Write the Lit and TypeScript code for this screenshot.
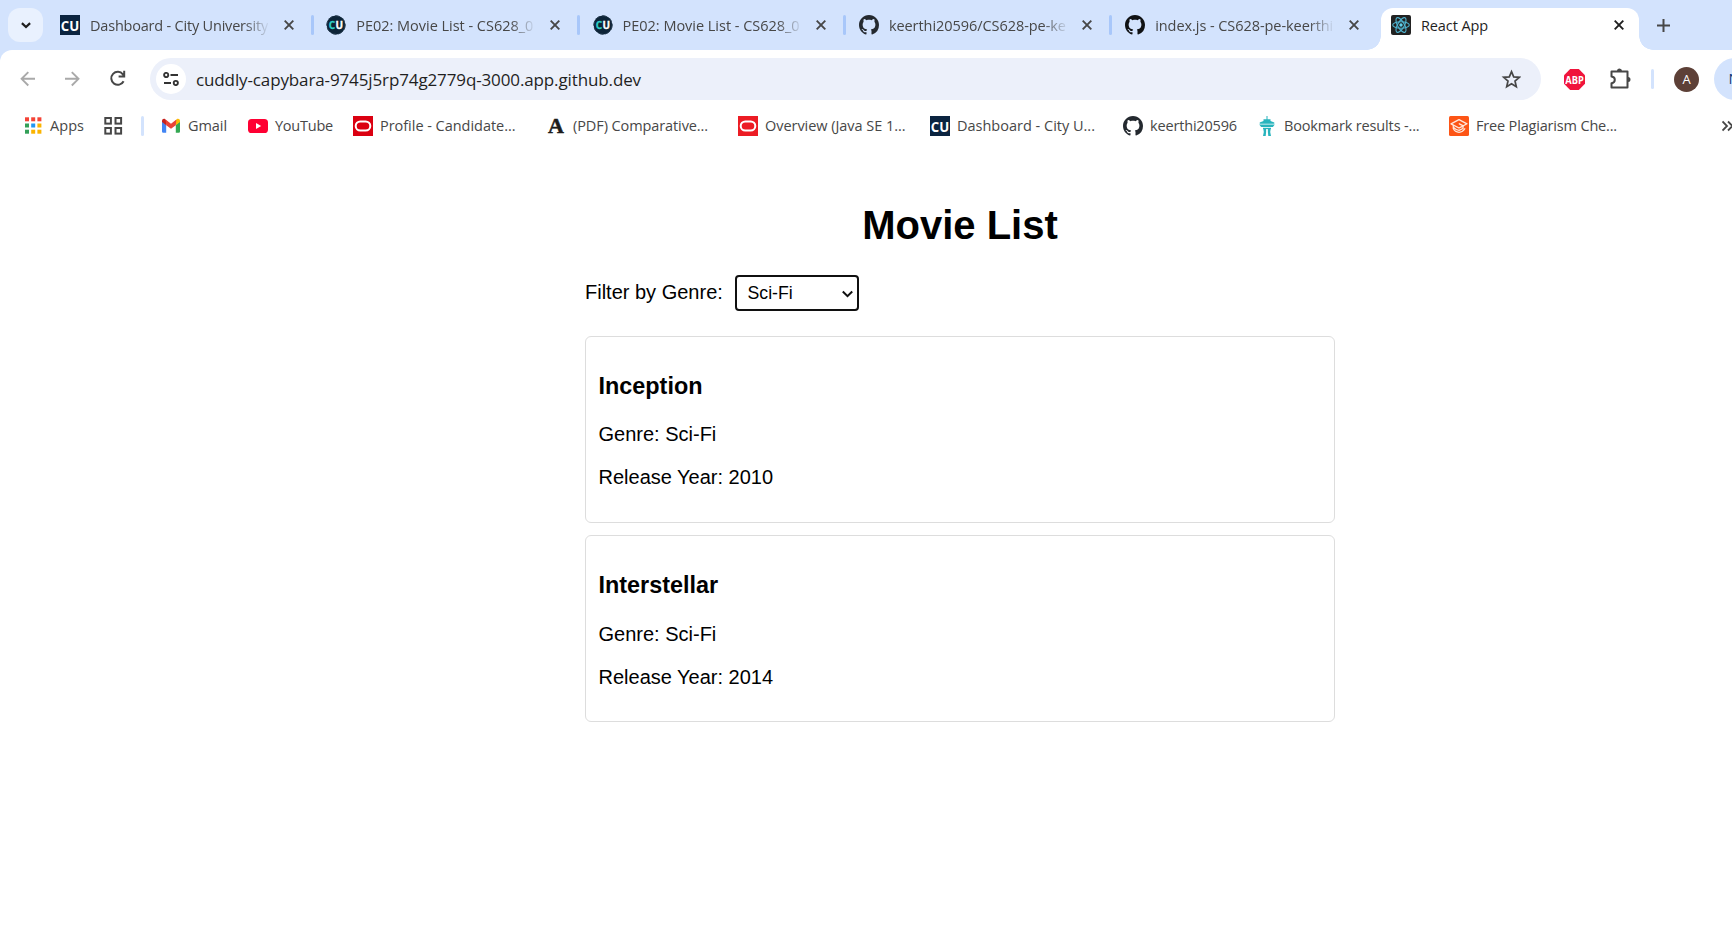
import { LitElement, html, svg, css, nothing } from "lit";
import { customElement, property } from "lit/decorators.js";

const github = (color: string) => html`<svg width="20" height="20" viewBox="0 0 16 16"><path fill=${color} d="M8 0C3.58 0 0 3.58 0 8c0 3.54 2.29 6.53 5.47 7.59.4.07.55-.17.55-.38 0-.19-.01-.82-.01-1.49-2.01.37-2.53-.49-2.69-.94-.09-.23-.48-.94-.82-1.13-.28-.15-.68-.52-.01-.53.63-.01 1.08.58 1.23.82.72 1.21 1.87.87 2.33.66.07-.52.28-.87.51-1.07-1.78-.2-3.64-.89-3.64-3.95 0-.87.31-1.59.82-2.15-.08-.2-.36-1.02.08-2.12 0 0 .67-.21 2.2.82.64-.18 1.32-.27 2-.27s1.36.09 2 .27c1.53-1.04 2.2-.82 2.2-.82.44 1.1.16 1.92.08 2.12.51.56.82 1.27.82 2.15 0 3.07-1.87 3.75-3.65 3.95.29.25.54.73.54 1.48 0 1.07-.01 1.93-.01 2.2 0 .21.15.46.55.38A8.01 8.01 0 0 0 16 8c0-4.42-3.58-8-8-8z"/></svg>`;

const cuSquare = html`<svg width="20" height="20" viewBox="0 0 20 20"><rect width="20" height="20" fill="#0b2440"/><text x="10" y="15.6" text-anchor="middle" font-family="Open Sans, sans-serif" font-weight="700" font-size="15" textLength="18.4" lengthAdjust="spacingAndGlyphs" fill="#fff">CU</text></svg>`;

const cuRound = html`<svg width="20" height="20" viewBox="0 0 20 20"><circle cx="10" cy="10" r="9.4" fill="#0d2438"/><circle cx="10" cy="10" r="9.2" fill="none" stroke="#2c4256" stroke-width="1" stroke-dasharray="5 2"/><text y="13.6" font-family="Open Sans, sans-serif" font-weight="700" font-size="10"><tspan x="2.8" fill="#2fd0c8" stroke="#2fd0c8" stroke-width=".3">C</tspan><tspan x="9.5" fill="#fff" stroke="#fff" stroke-width=".3">U</tspan></text></svg>`;

const oracle = (color: string) => html`<svg width="20" height="20" viewBox="0 0 20 20"><rect width="20" height="20" fill=${color}/><rect x="2.7" y="5.4" width="14.6" height="9.2" rx="4.6" fill="none" stroke="#fff" stroke-width="2"/></svg>`;

const react = html`<svg width="20" height="20" viewBox="0 0 20 20"><rect width="20" height="20" rx="2" fill="#222"/><g fill="none" stroke="#4fb4d0" stroke-width="1.1"><ellipse cx="10" cy="10" rx="8.3" ry="3.3"/><ellipse cx="10" cy="10" rx="8.3" ry="3.3" transform="rotate(60 10 10)"/><ellipse cx="10" cy="10" rx="8.3" ry="3.3" transform="rotate(120 10 10)"/></g><circle cx="10" cy="10" r="1.7" fill="#5fd0ec"/></svg>`;

const appsColors = ["#f44336", "#f44336", "#f44336", "#34a058", "#2196f3", "#fbb400", "#34a058", "#fbb400", "#fbb400"];
const appsGrid = html`<svg width="20" height="20" viewBox="0 0 20 20">${appsColors.map(
  (c, i) => svg`<rect x=${2 + (i % 3) * 6.2} y=${1.3 + Math.floor(i / 3) * 6.2} width="4" height="4" fill=${c}/>`
)}</svg>`;

const tiles = html`<svg width="20" height="20" viewBox="0 0 20 20" fill="none" stroke="#474747" stroke-width="2"><rect x="2.300" y="2" width="5.600" height="5.600"/><rect x="12.500" y="2" width="5.600" height="5.600"/><rect x="2.300" y="12" width="5.600" height="5.600"/><rect x="12.500" y="12" width="5.600" height="5.600"/></svg>`;

const gmail = html`<svg width="20" height="20" viewBox="0 0 20 20"><path fill="#4285f4" d="M1 5.5V15.6A1.2 1.2 0 0 0 2.2 16.8H5.2V8.6Z"/><path fill="#34a853" d="M14.8 8.6V16.8H17.8A1.2 1.2 0 0 0 19 15.6V5.5Z"/><path fill="#fbbc04" d="M14.8 4.6V9.2L19 6V4.8C19 3 17 2.200 15.700 3.300Z"/><path fill="#c5221f" d="M1 4.800V6L5.200 9.200V4.600L4.300 3.300C3 2.200 1 3 1 4.800Z"/><path fill="#ea4335" d="M4.600 3.600 10 7.800 15.400 3.600 14.800 9.200 10 12.800 5.200 9.200Z"/></svg>`;

const youtube = html`<svg width="20" height="20" viewBox="0 0 20 20"><rect y="3" width="20" height="14" rx="3.6" fill="#ff0033"/><path fill="#fff" d="M8 7v6l5.200-3z"/></svg>`;

const serifA = html`<svg width="20" height="20" viewBox="0 0 20 20"><text x="10" y="17.300" text-anchor="middle" font-family="Liberation Serif, serif" font-weight="700" font-size="22" fill="#1c1c1c" stroke="#1c1c1c" stroke-width=".5">A</text></svg>`;

const needle = html`<svg width="20" height="20" viewBox="0 0 20 20"><g fill="#28b4bd"><path d="M9.500 0h1v4h-1zM6.500 3.300h7v1.700l3.800 1.400v1.300H2.700V6.400L6.500 5z"/><path d="M2.200 8.500h15.600l-2 2.500H4.200z"/><path d="M6 11.800h8v1.300H6z"/><path d="M6.300 12.800h2.800v3.200l-.4 4H6l.8-4zM10.900 12.800h2.800l-.5 3.200.8 4h-2.700l-.4-4z"/></g></svg>`;

const cap = html`<svg width="20" height="20" viewBox="0 0 20 20"><rect width="20" height="20" rx="1.500" fill="#fd5516"/><g fill="none" stroke="#ffe9df" stroke-width="1.300" stroke-linejoin="round" stroke-linecap="round"><path d="M10.300 7.800 14.300 9.800 10 12 2 7.800 10 3.600 18 7.800 14.300 9.800"/><path d="M4.300 9.300V12.500Q6 16 10 16.300Q14 16 15.800 12.800M4.600 11.400Q7 14.200 10 14.300L14 12.500V10"/></g></svg>`;

const cross = (color: string) => html`<svg width="10" height="10" viewBox="0 0 10 10"><path d="M.7.7 9.300 9.300M9.300.7.7 9.300" stroke=${color} stroke-width="1.900"/></svg>`;

/** A single line of interface text, tracked so that it fills the given width. */
@customElement("fit-label")
class FitLabel extends LitElement {
  @property() text = "";
  @property({ type: Number }) width = 0;
  static styles = css`
    :host { display: block; white-space: pre; }
    .line { display: inline-block; }
  `;
  render() {
    return html`<span class="line">${this.text}</span>`;
  }
  firstUpdated() {
    const line = this.renderRoot.querySelector<HTMLElement>(".line")!;
    if (this.width) {
      const extra = this.width - line.getBoundingClientRect().width;
      line.style.letterSpacing = `${extra / this.text.length}px`;
    }
  }
}

const tabs = [
  { icon: cuSquare, text: "Dashboard - City University", width: 178 },
  { icon: cuRound, text: "PE02: Movie List - CS628_0", width: 177 },
  { icon: cuRound, text: "PE02: Movie List - CS628_0", width: 177 },
  { icon: github("#24292f"), text: "keerthi20596/CS628-pe-ke", width: 177 },
  { icon: github("#101214"), text: "index.js - CS628-pe-keerthi", width: 178 },
  { icon: react, text: "React App", width: 67, active: true },
];

const bookmarks = [
  { icon: gmail, text: "Gmail", width: 39 },
  { icon: youtube, text: "YouTube", width: 58 },
  { icon: oracle("#db0011"), text: "Profile - Candidate...", width: 135.5 },
  { icon: serifA, text: "(PDF) Comparative...", width: 135 },
  { icon: oracle("#ec1c24"), text: "Overview (Java SE 1...", width: 140.5 },
  { icon: cuSquare, text: "Dashboard - City U...", width: 138 },
  { icon: github("#24292f"), text: "keerthi20596", width: 87 },
  { icon: needle, text: "Bookmark results -...", width: 135.5 },
  { icon: cap, text: "Free Plagiarism Che...", width: 141 },
];

@customElement("browser-chrome")
class BrowserChrome extends LitElement {
  static styles = css`
    :host { display: block; font: 14.5px/20px "Open Sans", "Noto Sans", sans-serif; color: #474747; background: #d3e3fd; }
    svg { display: block; flex: none; }
    .strip { display: flex; height: 50px; padding-left: 8px; box-sizing: border-box; }
    .search { width: 35px; height: 34px; margin: 8px 5px 0 0; border-radius: 12px; background: #e9f1fe; display: grid; place-items: center; flex: none; }
    .tab { width: 266.3px; flex: none; display: flex; align-items: center; box-sizing: border-box; padding-left: 12px; }
    .label { width: 178px; margin: 1px 15.5px 0 10px; overflow: hidden; mask-image: linear-gradient(90deg, #000 154px, transparent 180px); }
    .sep { width: 3px; height: 20px; border-radius: 2px; background: #a8c7fa; margin-left: 17px; }
    .active { width: 286px; margin: 7.5px -7px 0 -12.5px; padding: 0; align-items: stretch; color: #1f1f1f; }
    .flare { width: 14px; height: 14px; align-self: flex-end; background: radial-gradient(circle at 0 0, transparent 13.500px, #fff 14px); }
    .flare.right { background: radial-gradient(circle at 100% 0, transparent 13.500px, #fff 14px); }
    .body { width: 258px; background: #fff; border-radius: 12px 12px 0 0; display: flex; align-items: center; padding: 0 0 7.5px 10px; box-sizing: border-box; }
    .active .label { mask-image: none; margin-right: 15px; }
    .plus { align-self: center; margin-left: 11px; }
    .shell { background: #fff; border-top-left-radius: 12px; }
    .tools { display: flex; align-items: center; height: 58px; overflow: hidden; }
    .nav { display: flex; width: 150px; box-sizing: border-box; padding-left: 18px; gap: 25px; flex: none; }
    .omni { width: 1391px; height: 42px; border-radius: 21px; background: #ecf0fa; display: flex; align-items: center; flex: none; box-sizing: border-box; padding: 0 20px 0 6px; color: #1f1f1f; font-size: 17px; line-height: 24px; }
    .site { width: 30px; height: 30px; border-radius: 50%; background: #fff; display: grid; place-items: center; margin-right: 10px; }
    .url { flex: 1; padding-top: 1px; }
    .abp { margin-left: 23px; }
    .puzzle { margin-left: 23px; }
    .rule { width: 3px; height: 20px; background: #d3e3fd; border-radius: 2px; margin-left: 19px; flex: none; }
    .avatar { width: 25px; height: 25px; border-radius: 50%; background: #5d4037; color: #fff; font-size: 13px; display: grid; place-items: center; margin-left: 20px; flex: none; }
    .chip { margin-left: 15px; height: 42px; width: 100px; box-sizing: border-box; padding: 11px 0 0 14.5px; border-radius: 21px; background: #d3e3fd; color: #0b3a78; flex: none; }
    .marks { height: 36px; padding: 0 0 6px; display: grid; align-items: center; overflow: hidden;
      grid-template-columns: 23px 80px 38px 20px 87px 105px 193px 192px 192px 193px 134px 192px 273px 12px; }
    .mark { display: flex; align-items: center; gap: 7px; }
    .bar { width: 3px; height: 20px; background: #d3e3fd; border-radius: 2px; }
  `;
  render() {
    return html`
      <div class="strip">
        <div class="search"><svg width="10" height="7" viewBox="0 0 10 7"><path d="M.9 1.100 5 5 9.100 1.100" fill="none" stroke="#1f1f1f" stroke-width="2.200"/></svg></div>
        ${tabs.map((t, i) =>
          t.active
            ? html`<div class="tab active"><div class="flare"></div><div class="body">${t.icon}<fit-label class="label" .text=${t.text} .width=${t.width}></fit-label>${cross("#1f1f1f")}</div><div class="flare right"></div></div>`
            : html`<div class="tab">${t.icon}<fit-label class="label" .text=${t.text} .width=${t.width}></fit-label>${cross("#474747")}${i < 4 ? html`<div class="sep"></div>` : nothing}</div>`
        )}
        <svg class="plus" width="13" height="13" viewBox="0 0 13 13"><path d="M6.500 0V13M0 6.500H13" stroke="#474747" stroke-width="2"/></svg>
      </div>
      <div class="shell">
        <div class="tools">
          <div class="nav">
            <svg width="20" height="20" viewBox="0 0 20 20" fill="none" stroke="#a9a9a9" stroke-width="1.900"><path d="M17 9.800H4M10.300 3.100 3.600 9.800 10.300 16.500"/></svg>
            <svg width="20" height="20" viewBox="0 0 20 20" fill="none" stroke="#a9a9a9" stroke-width="1.900"><path d="M2 9.800H15M8.800 3.100 15.500 9.800 8.800 16.500"/></svg>
            <svg width="20" height="20" viewBox="0 0 20 20" fill="none" stroke="#474747" stroke-width="2"><path d="M15.600 12.200A6.500 6.500 0 1 1 14.900 5.300L16 6.800M16.200 1.800V7.400H10.600"/></svg>
          </div>
          <div class="omni">
            <div class="site"><svg width="16" height="14" viewBox="0 0 16 14" fill="none" stroke="#333" stroke-width="1.900"><circle cx="3.200" cy="3" r="2.100"/><path d="M7.500 3H15M1 11H8"/><circle cx="12.800" cy="11" r="2.100"/></svg></div>
            <fit-label class="url" .text=${"cuddly-capybara-9745j5rp74g2779q-3000.app.github.dev"} .width=${445}></fit-label>
            <svg width="20" height="20" viewBox="0 0 20 20"><path d="M10.500 2.600 12.700 7.900 18.300 8.300 14 12 15.300 17.700 10.500 14.700 5.700 17.700 7 12 2.700 8.300 8.300 7.900Z" fill="none" stroke="#474747" stroke-width="1.700"/></svg>
          </div>
          <svg class="abp" width="21" height="21" viewBox="0 0 21 21"><path fill="#f0143c" d="M6.200 0h8.600L21 6.200v8.600L14.800 21H6.200L0 14.800V6.200z"/><text x="10.500" y="14.600" text-anchor="middle" font-family="Open Sans, sans-serif" font-weight="700" font-size="11" textLength="18.500" lengthAdjust="spacingAndGlyphs" fill="#fff">ABP</text></svg>
          <svg class="puzzle" width="24" height="24" viewBox="0 0 24 24"><path d="M3.500 4.500H19.500V20.500H3.500V16.200Q6.800 15.900 6.800 12.800T3.500 9.400Z" fill="none" stroke="#474747" stroke-width="2" stroke-linejoin="round"/><path d="M9 4a2.500 2.500 0 0 1 5 0zM20 10a2.500 2.500 0 0 1 0 5z" fill="#474747"/></svg>
          <div class="rule"></div>
          <div class="avatar">A</div>
          <div class="chip">N</div>
        </div>
        <div class="marks">
          <span></span>
          <div class="mark">${appsGrid}<fit-label .text=${"Apps"} .width=${34}></fit-label></div>
          ${tiles}
          <div class="bar"></div>
          ${bookmarks.map((b) => html`<div class="mark">${b.icon}<fit-label .text=${b.text} .width=${b.width}></fit-label></div>`)}
          <svg width="12" height="12" viewBox="0 0 12 12" fill="none" stroke="#474747" stroke-width="1.800"><path d="M.5 1.500 5 6 .5 10.500M6 1.500 10.500 6 6 10.500"/></svg>
        </div>
      </div>
    `;
  }
}

@customElement("movie-list")
class MovieList extends LitElement {
  static styles = css`
    :host { display: block; width: 750px; margin: 0 auto; padding: 0 0 0 188px; font: 20px/23px "Liberation Sans", Arial, sans-serif; color: #000; }
    h1 { font-size: 40px; line-height: 46px; margin: 0; text-align: center; }
    .filter { display: flex; margin-top: 27px; height: 36px; }
    .name { padding-top: 6px; width: 150px; }
    .select { width: 124px; height: 36px; box-sizing: border-box; border: 2px solid #101010; border-radius: 4px; padding: 0 4.500px 0 10.500px; display: flex; align-items: center; justify-content: space-between; font-size: 17.700px; }
    .chevron { margin-top: 1px; }
    .cards { display: grid; gap: 12.5px; margin-top: 24.8px; }
    .card { height: 187px; box-sizing: border-box; border: 1px solid #ddd; border-radius: 6px; padding: 12.5px; }
    h3 { font-size: 23.4px; line-height: 27px; margin: 23.4px 0 23.5px; }
    p { margin: 20px 0; }
  `;
  movies = [
    { title: "Inception", genre: "Sci-Fi", year: 2010 },
    { title: "Interstellar", genre: "Sci-Fi", year: 2014 },
  ];
  render() {
    return html`
      <h1>Movie List</h1>
      <div class="filter">
        <span class="name">Filter by Genre:</span>
        <div class="select"><span>Sci-Fi</span><svg class="chevron" width="11" height="8" viewBox="0 0 11 8"><path d="M.8 1.500 5.500 6.200 10.200 1.500" fill="none" stroke="#101010" stroke-width="2"/></svg></div>
      </div>
      <div class="cards">
        ${this.movies.map((m) => html`<div class="card"><h3>${m.title}</h3><p>Genre: ${m.genre}</p><p>Release Year: ${m.year}</p></div>`)}
      </div>
    `;
  }
}

@customElement("app-root")
class AppRoot extends LitElement {
  static styles = css`
    :host { display: block; height: 930px; overflow: hidden; background: #fff; }
    .page { padding-top: 52px; }
  `;
  render() {
    return html`<browser-chrome></browser-chrome><div class="page"><movie-list></movie-list></div>`;
  }
}
